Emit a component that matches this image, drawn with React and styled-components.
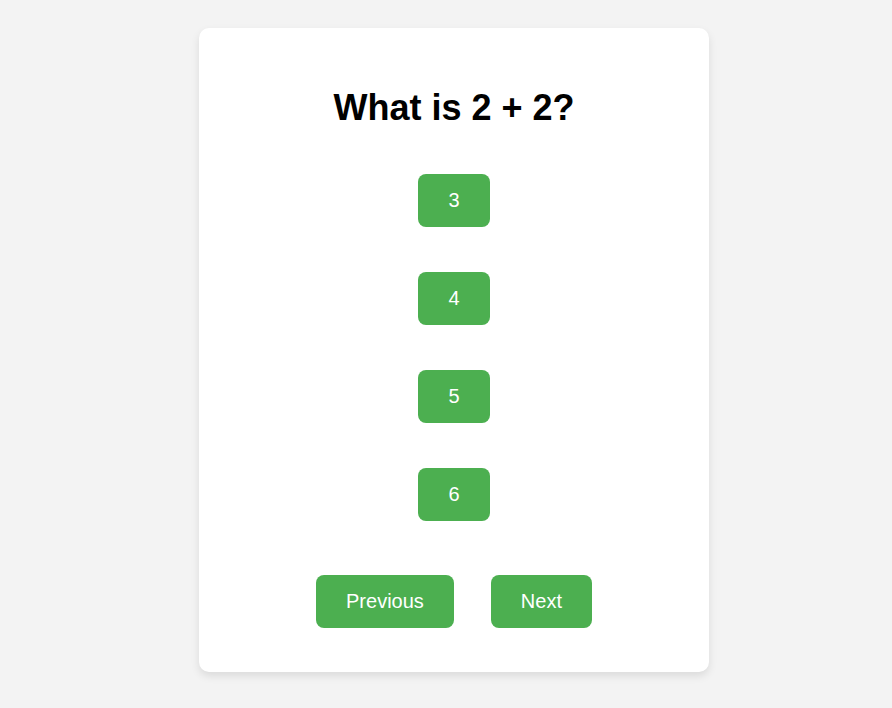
import React from "react";
import styled, { createGlobalStyle } from "styled-components";

const Global = createGlobalStyle`
  html, body { margin: 0; padding: 0; background: #f3f3f3; }
  body { font-family: "Liberation Sans", Arial, sans-serif; }
`;

const Page = styled.div`
  display: flex;
  justify-content: center;
  padding: 28px 0 36px 16px;
`;

const Card = styled.div`
  width: 510px;
  box-sizing: border-box;
  background: #ffffff;
  border-radius: 10px;
  box-shadow: 0 4px 8px rgba(0, 0, 0, 0.1);
  padding: 59px 0 44px;
  display: flex;
  flex-direction: column;
  align-items: center;
`;

const Title = styled.h1`
  margin: 0;
  font-size: 36px;
  line-height: 41px;
  font-weight: bold;
  color: #000;
`;

const Options = styled.div`
  margin-top: 46px;
  display: flex;
  flex-direction: column;
  align-items: center;
  gap: 45px;
`;

const Button = styled.button`
  background: #4caf50;
  color: #ffffff;
  border: none;
  border-radius: 8px;
  padding: 15px 30px;
  font-family: "Liberation Sans", Arial, sans-serif;
  font-size: 20px;
  line-height: 23px;
  cursor: pointer;
`;

const Nav = styled.div`
  margin-top: 54px;
  display: flex;
  gap: 37px;
`;

export default function App() {
  const options = ["3", "4", "5", "6"];
  return (
    <>
      <Global />
      <Page>
        <Card>
          <Title>What is 2 + 2?</Title>
          <Options>
            {options.map((o) => (
              <Button key={o}>{o}</Button>
            ))}
          </Options>
          <Nav>
            <Button>Previous</Button>
            <Button>Next</Button>
          </Nav>
        </Card>
      </Page>
    </>
  );
}
